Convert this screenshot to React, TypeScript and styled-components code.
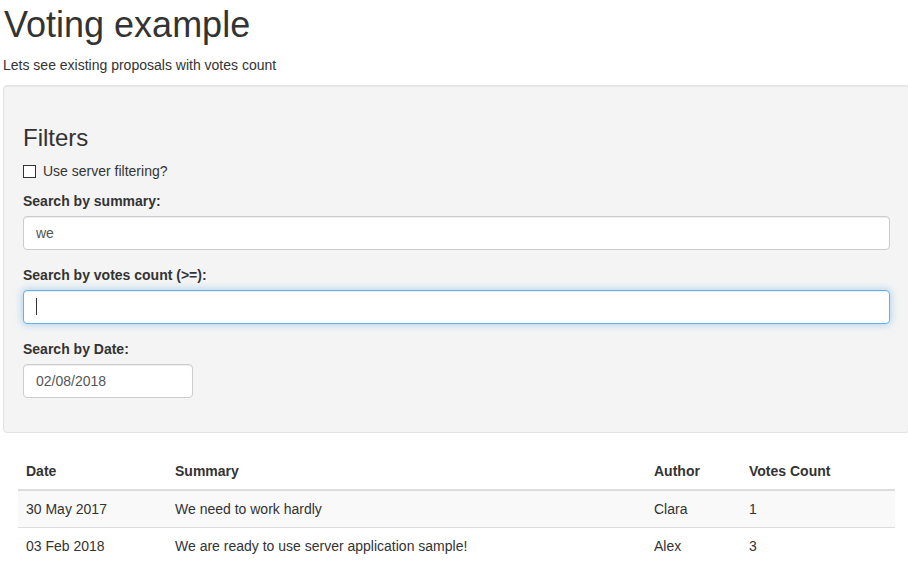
import * as React from "react"
import styled, { createGlobalStyle, css } from "styled-components"

type Proposal = {
  date: string
  summary: string
  author: string
  votes: number
}

const proposals: Proposal[] = [
  { date: "30 May 2017", summary: "We need to work hardly", author: "Clara", votes: 1 },
  { date: "03 Feb 2018", summary: "We are ready to use server application sample!", author: "Alex", votes: 3 },
]

const GlobalStyle = createGlobalStyle`
  html, body {
    margin: 0;
    padding: 0;
    overflow: hidden;
    background: #fff;
  }
  body {
    font-family: "Liberation Sans", Arial, sans-serif;
    font-size: 14px;
    line-height: 1.42857143;
    color: #333;
  }
  * {
    box-sizing: border-box;
  }
`

const StyledPage = styled.div`
  width: 910px;
  padding: 5px 0 0 3px;
`

const StyledTitle = styled.h1`
  margin: 0 0 10px 1px;
  font-size: 36px;
  font-weight: 500;
  line-height: 1.1;
`

const StyledLead = styled.p`
  margin: 0 0 10px 0;
`

const StyledWell = styled.form`
  min-height: 20px;
  padding: 19px;
  margin-bottom: 20px;
  background-color: #f4f4f4;
  border: 1px solid #e3e3e3;
  border-radius: 4px;
  box-shadow: inset 0 1px 1px rgba(0, 0, 0, 0.05);
`

const StyledWellTitle = styled.h3`
  margin: 20px 0 10px;
  font-size: 24px;
  font-weight: 500;
  line-height: 1.1;
`

const StyledCheckRow = styled.label`
  display: flex;
  align-items: center;
  gap: 7px;
  margin: 10px 0;
  line-height: 20px;
  cursor: pointer;
`

const StyledBox = styled.span`
  display: inline-block;
  width: 13px;
  height: 13px;
  margin-top: 1px;
  background: #fff;
  border: 1px solid #333;
`

const StyledGroup = styled.div`
  margin-bottom: 15px;
`

const StyledLabel = styled.label`
  display: inline-block;
  margin-bottom: 5px;
  font-weight: bold;
`

const StyledField = styled.div<{ $width?: number }>`
  position: relative;
  width: ${p => (p.$width ? `${p.$width}px` : "100%")};
`

const StyledInput = styled.input<{ $focused?: boolean }>`
  display: block;
  width: 100%;
  height: 34px;
  padding: 6px 12px;
  font-family: inherit;
  font-size: 14px;
  line-height: 1.42857143;
  color: #555;
  background-color: #fff;
  border: 1px solid #ccc;
  border-radius: 4px;
  box-shadow: inset 0 1px 1px rgba(0, 0, 0, 0.075);
  outline: 0;
  caret-color: transparent;

  ${p =>
    p.$focused &&
    css`
      border-color: #66afe9;
      box-shadow: inset 0 1px 1px rgba(0, 0, 0, 0.075),
        0 0 8px rgba(102, 175, 233, 0.6);
    `}
`

const StyledCaret = styled.span`
  position: absolute;
  left: 13px;
  top: 8px;
  width: 1px;
  height: 17px;
  background: #333;
`

const StyledTableWrap = styled.div`
  padding: 0 15px;
`

const StyledTable = styled.table`
  width: 100%;
  border-collapse: collapse;
  border-spacing: 0;
  table-layout: fixed;

  & th,
  & td {
    padding: 8px;
    line-height: 20px;
    text-align: left;
  }

  & th {
    vertical-align: bottom;
    border-bottom: 2px solid #ddd;
    font-weight: bold;
  }

  & td {
    vertical-align: top;
    border-top: 1px solid #ddd;
  }

  & tbody tr:nth-of-type(odd) {
    background-color: #f9f9f9;
  }
`

export default function App() {
  return (
    <StyledPage>
      <GlobalStyle />
      <StyledTitle>Voting example</StyledTitle>
      <StyledLead>Lets see existing proposals with votes count</StyledLead>

      <StyledWell onSubmit={e => e.preventDefault()}>
        <StyledWellTitle>Filters</StyledWellTitle>
        <StyledCheckRow>
          <StyledBox />
          Use server filtering?
        </StyledCheckRow>

        <StyledGroup>
          <StyledLabel htmlFor="summary">Search by summary:</StyledLabel>
          <StyledField>
            <StyledInput id="summary" type="text" defaultValue="we" />
          </StyledField>
        </StyledGroup>

        <StyledGroup>
          <StyledLabel htmlFor="votes">Search by votes count (&gt;=):</StyledLabel>
          <StyledField>
            <StyledInput id="votes" type="text" defaultValue="" $focused />
            <StyledCaret />
          </StyledField>
        </StyledGroup>

        <StyledGroup>
          <StyledLabel htmlFor="date">Search by Date:</StyledLabel>
          <StyledField $width={170}>
            <StyledInput id="date" type="text" defaultValue="02/08/2018" />
          </StyledField>
        </StyledGroup>
      </StyledWell>

      <StyledTableWrap>
        <StyledTable>
          <colgroup>
            <col style={{ width: 149 }} />
            <col style={{ width: 479 }} />
            <col style={{ width: 95 }} />
            <col />
          </colgroup>
          <thead>
            <tr>
              <th>Date</th>
              <th>Summary</th>
              <th>Author</th>
              <th>Votes Count</th>
            </tr>
          </thead>
          <tbody>
            {proposals.map(p => (
              <tr key={p.date}>
                <td>{p.date}</td>
                <td>{p.summary}</td>
                <td>{p.author}</td>
                <td>{p.votes}</td>
              </tr>
            ))}
          </tbody>
        </StyledTable>
      </StyledTableWrap>
    </StyledPage>
  )
}
